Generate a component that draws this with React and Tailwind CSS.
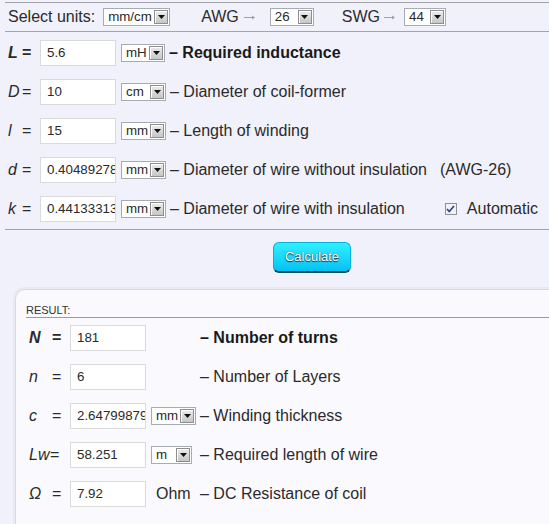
import React from "react";

const Sel = ({ v, w }) => (
  <div className={`flex h-[18px] shrink-0 border border-[#a5acb2] bg-white ${w}`}>
    <span className="flex-1 pl-[4px] text-[13.33px] leading-[16px] whitespace-nowrap overflow-hidden">{v}</span>
    <span className="w-[14px] my-[1px] mr-[1px] flex items-center justify-center border border-[#8e8e8e] bg-gradient-to-b from-[#ececec] to-[#c6c6c6] shadow-[inset_1px_1px_0_#fff]">
      <svg width="7" height="4" viewBox="0 0 7 4">
        <path d="M0 0h7L3.5 4z" fill="#111" />
      </svg>
    </span>
  </div>
);

const Arrow = () => (
  <svg width="12" height="8" viewBox="0 0 12 8" className="shrink-0">
    <path d="M0 4.5h10" stroke="#a0a0a0" strokeWidth="1" />
    <path d="M8 2.5l3 2-3 2z" fill="#a0a0a0" />
  </svg>
);

const Field = ({ v }) => (
  <input
    readOnly
    defaultValue={v}
    className="w-[76px] h-[26px] shrink-0 border border-[#dadada] bg-white pl-[6px] text-[13.33px] text-[#2a2a2a] outline-none"
  />
);

const Row = ({ sym, eq, v, unit, uw, children }) => (
  <div className="flex items-center h-[39px] pl-[8px]">
    <div className="w-[32px] shrink-0 flex whitespace-nowrap">
      <i className="w-[14px]">{sym}</i>
      <span>{eq}</span>
    </div>
    <Field v={v} />
    <div className="ml-[5px]">
      <Sel v={unit} w={uw} />
    </div>
    {children}
  </div>
);

const ResRow = ({ sym, v, mid, children }) => (
  <div className="flex items-center h-[39px] pl-[13px]">
    <div className="w-[41px] shrink-0 flex whitespace-nowrap">{sym}</div>
    <Field v={v} />
    <div className="w-[54px] shrink-0 flex">{mid}</div>
    {children}
  </div>
);

const App = () => {
  return (
    <div
      className="w-[549px] h-[524px] overflow-hidden bg-[#f1f1fb] text-[#2a2a2a] text-[16px]"
      style={{ fontFamily: '"Liberation Sans", Arial, sans-serif' }}
    >
      <div className="h-[2px]" />
      <div className="ml-[5px] h-[30px] border-t border-b border-[#a4a4a8] flex items-center pl-[3px]">
        <span>Select units:</span>
        <div className="ml-[8px]">
          <Sel v="mm/cm" w="w-[67px]" />
        </div>
        <span className="ml-[31px]">AWG</span>
        <span className="ml-[5px]"><Arrow /></span>
        <div className="ml-[14px]">
          <Sel v="26" w="w-[44px]" />
        </div>
        <span className="ml-[28px]">SWG</span>
        <span className="ml-[4px]"><Arrow /></span>
        <div className="ml-[8px]">
          <Sel v="44" w="w-[42px]" />
        </div>
      </div>

      <div className="pt-[1px]">
        <Row sym={<b>L</b>} eq={<b>=</b>} v="5.6" unit="mH" uw="w-[44px]">
          <span className="ml-[4px] font-bold text-[#1a1a1a]">– Required inductance</span>
        </Row>
        <Row sym="D" eq="=" v="10" unit="cm" uw="w-[45px]">
          <span className="ml-[4px]">– Diameter of coil-former</span>
        </Row>
        <Row sym="l" eq="=" v="15" unit="mm" uw="w-[45px]">
          <span className="ml-[4px]">– Length of winding</span>
        </Row>
        <Row sym="d" eq="=" v="0.40489278" unit="mm" uw="w-[45px]">
          <span className="ml-[4px]">– Diameter of wire without insulation</span>
          <span className="ml-[13px]">(AWG-26)</span>
        </Row>
        <Row sym="k" eq="=" v="0.44133313" unit="mm" uw="w-[45px]">
          <span className="ml-[4px]">– Diameter of wire with insulation</span>
          <div className="ml-auto mr-[11px] flex items-center">
            <span className="w-[12px] h-[12px] border border-[#8f8f9a] bg-[#f2f2f6] flex items-center justify-center">
              <svg width="9" height="8" viewBox="0 0 9 8">
                <path d="M1 4l2.3 2.5L8 1" stroke="#2b3f7a" strokeWidth="1.6" fill="none" />
              </svg>
            </span>
            <span className="ml-[10px]">Automatic</span>
          </div>
        </Row>
      </div>
      <div className="ml-[5px] mt-[1px] border-t border-[#a4a4a8]" />

      <div className="pt-[12px] pl-[273px] pb-[16px]">
        <button className="w-[78px] h-[31px] rounded-[6px] border border-[#05b0da] border-b-[2px] border-b-[#16495a] bg-gradient-to-b from-[#2ff0ff] to-[#00c2f4] text-white text-[13px] [text-shadow:0_1px_1px_#123b4a,0_0_1px_#123b4a]">
          Calculate
        </button>
      </div>

      <div className="ml-[15px] w-[560px] h-[300px] rounded-tl-[10px] border border-[#d9d9e2] bg-[#fafafe] shadow-[0_0_0_2px_#e9e9f3]">
        <div className="ml-[10px] mt-[14px] h-[14px] border-b border-[#9c9c9c] text-[11px] leading-[13px] text-[#333]">
          RESULT:
        </div>
        <ResRow sym={<b className="flex"><i className="w-[23px]">N</i>=</b>} v="181" mid={null}>
          <span className="font-bold text-[#1a1a1a]">– Number of turns</span>
        </ResRow>
        <ResRow sym={<><i className="w-[23px]">n</i>=</>} v="6" mid={null}>
          <span>– Number of Layers</span>
        </ResRow>
        <ResRow
          sym={<><i className="w-[23px]">c</i>=</>}
          v="2.64799879"
          mid={<div className="ml-[5px]"><Sel v="mm" w="w-[45px]" /></div>}
        >
          <span>– Winding thickness</span>
        </ResRow>
        <ResRow
          sym={<><i className="w-[21px]">Lw</i>=</>}
          v="58.251"
          mid={<div className="ml-[5px]"><Sel v="m" w="w-[41px]" /></div>}
        >
          <span>– Required length of wire</span>
        </ResRow>
        <ResRow sym={<><i className="w-[23px]">Ω</i>=</>} v="7.92" mid={<span className="ml-[10px]">Ohm</span>}>
          <span>– DC Resistance of coil</span>
        </ResRow>
      </div>
    </div>
  );
};

export default App;
